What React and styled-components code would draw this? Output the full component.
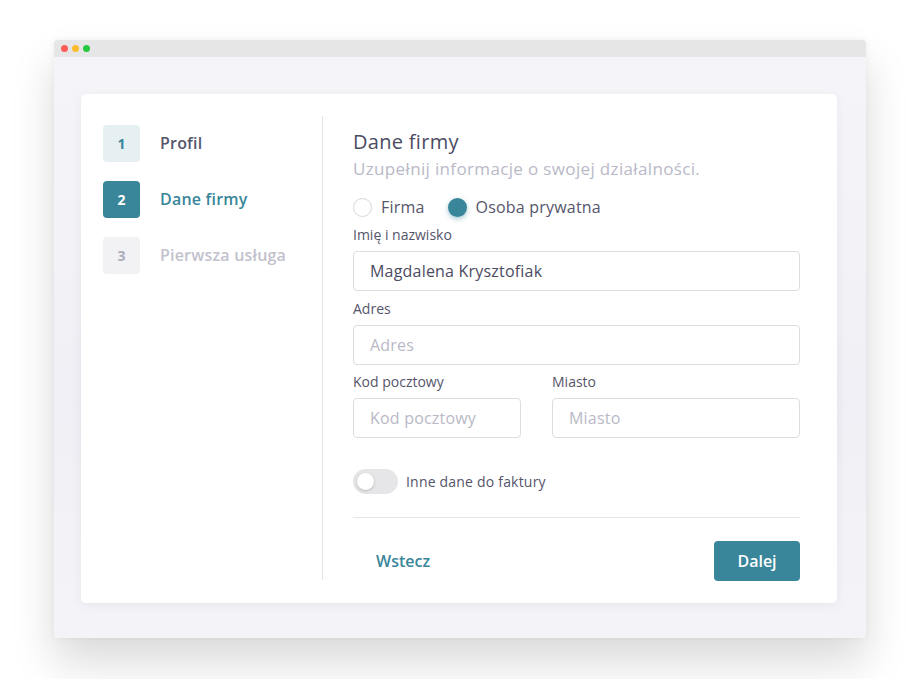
import React from 'react';
import styled, { createGlobalStyle } from 'styled-components';

const teal = '#39869a';

const Global = createGlobalStyle`
  html, body {
    margin: 0;
    background: #ffffff;
    font-family: "Open Sans", "Noto Sans", sans-serif;
  }
  * { box-sizing: border-box; }
`;

const Page = styled.div`
  padding: 40px 54px 41px 54px;
`;

const Window = styled.div`
  width: 812px;
  height: 598px;
  border-radius: 4px;
  overflow: hidden;
  display: flex;
  flex-direction: column;
  box-shadow: 0 24px 44px rgba(0, 0, 0, 0.15), 0 0 6px rgba(0, 0, 0, 0.05);
`;

const TitleBar = styled.div`
  flex-shrink: 0;
  height: 17px;
  background: #e6e6e6;
  display: flex;
  align-items: center;
  gap: 4px;
  padding-left: 7px;
`;

const Dot = styled.span`
  width: 7px;
  height: 7px;
  border-radius: 50%;
  background: ${p => p.color};
`;

const WindowBody = styled.div`
  flex: 1;
  min-height: 0;
  background: linear-gradient(#f5f5f9, #efeff5 60%, #f4f4f8);
  padding: 37px 29px 35px 27px;
  display: flex;
`;

const Card = styled.div`
  flex: 1;
  background: #fff;
  border-radius: 5px;
  box-shadow: 0 2px 10px rgba(60, 60, 100, 0.07);
  padding: 22px 37px 23px 22px;
  display: flex;
`;

const Steps = styled.div`
  width: 219px;
  padding-top: 9px;
  display: flex;
  flex-direction: column;
  gap: 19px;
`;

const Step = styled.div`
  display: flex;
  align-items: center;
  gap: 20px;
  height: 37px;
`;

const stepColors = {
  done: { bg: '#e6f0f3', fg: teal, label: '#56566b' },
  active: { bg: teal, fg: '#fff', label: teal },
  todo: { bg: '#f2f2f4', fg: '#acacb8', label: '#c2c2cd' },
};

const Badge = styled.div`
  width: 37px;
  height: 37px;
  border-radius: 4px;
  background: ${p => stepColors[p.$state].bg};
  color: ${p => stepColors[p.$state].fg};
  font-size: 14px;
  font-weight: 700;
  display: flex;
  align-items: center;
  justify-content: center;
`;

const StepLabel = styled.span`
  font-size: 16px;
  font-weight: 600;
  letter-spacing: 0.2px;
  margin-top: -2px;
  color: ${p => stepColors[p.$state].label};
`;

const Content = styled.div`
  flex: 1;
  border-left: 1px solid #e3e3e8;
  padding: 13px 0 0 30px;
  display: flex;
  flex-direction: column;
`;

const Title = styled.h2`
  margin: 0;
  font-size: 20px;
  font-weight: 500;
  line-height: 26px;
  letter-spacing: 0.3px;
  color: #4b4b62;
`;

const Subtitle = styled.p`
  margin: 3px 0 0;
  font-size: 17px;
  line-height: 22px;
  letter-spacing: 0.35px;
  color: #b9b9c7;
`;

const RadioRow = styled.div`
  display: flex;
  align-items: center;
  margin-top: 16px;
  height: 24px;
`;

const RadioOption = styled.label`
  display: flex;
  align-items: center;
  gap: 9px;
  margin-right: 23px;
  font-size: 16px;
  letter-spacing: 0.2px;
  color: #55556b;
`;

const RadioCircle = styled.span`
  width: 19px;
  height: 19px;
  border-radius: 50%;
  border: ${p => (p.$checked ? 'none' : '1px solid #d6d6de')};
  background: ${p => (p.$checked ? teal : '#fff')};
  box-shadow: ${p => (p.$checked ? '0 2px 5px rgba(57,134,154,0.45)' : 'none')};
`;

const Field = styled.div`
  display: flex;
  flex-direction: column;
  margin-top: ${p => p.$top || 0}px;
  width: ${p => p.$width || 'auto'};
  flex: ${p => (p.$grow ? 1 : 'none')};
`;

const FieldLabel = styled.label`
  font-size: 14px;
  line-height: 18px;
  color: #55556b;
  margin-bottom: 7px;
`;

const Input = styled.input`
  height: 40px;
  width: 100%;
  border: 1px solid #dcdce2;
  border-radius: 4px;
  padding: 0 16px;
  font-family: inherit;
  font-size: 16px;
  letter-spacing: 0.2px;
  color: #4b4b62;
  outline: none;
  &::placeholder {
    color: #b9b9c7;
  }
`;

const Row = styled.div`
  display: flex;
  gap: 31px;
  margin-top: 8px;
`;

const ToggleRow = styled.div`
  display: flex;
  align-items: center;
  gap: 8px;
  margin-top: 31px;
`;

const Toggle = styled.span`
  width: 45px;
  height: 25px;
  border-radius: 13px;
  background: #e6e6e8;
  display: flex;
  align-items: center;
  padding-left: 4px;
`;

const Knob = styled.span`
  width: 17px;
  height: 17px;
  border-radius: 50%;
  background: #fff;
  box-shadow: 0 1px 3px rgba(0, 0, 0, 0.2);
`;

const ToggleLabel = styled.span`
  font-size: 14px;
  letter-spacing: 0.2px;
  color: #55556b;
`;

const Divider = styled.hr`
  border: none;
  border-top: 1px solid #e1e7eb;
  margin: 23px 0 0;
`;

const Actions = styled.div`
  display: flex;
  justify-content: space-between;
  align-items: center;
  margin-top: 23px;
`;

const BackButton = styled.button`
  border: none;
  background: none;
  padding: 0 23px;
  font-family: inherit;
  font-size: 16px;
  font-weight: 600;
  color: ${teal};
`;

const NextButton = styled.button`
  width: 86px;
  height: 40px;
  border: none;
  border-radius: 4px;
  background: ${teal};
  color: #fff;
  font-family: inherit;
  font-size: 16px;
  font-weight: 600;
`;

const steps = [
  { n: 1, label: 'Profil', state: 'done' },
  { n: 2, label: 'Dane firmy', state: 'active' },
  { n: 3, label: 'Pierwsza usługa', state: 'todo' },
];

export default function App() {
  return (
    <Page>
      <Global />
      <Window>
        <TitleBar>
          <Dot color="#fd5d55" />
          <Dot color="#fdbb2e" />
          <Dot color="#27c840" />
        </TitleBar>
        <WindowBody>
          <Card>
            <Steps>
              {steps.map(s => (
                <Step key={s.n}>
                  <Badge $state={s.state}>{s.n}</Badge>
                  <StepLabel $state={s.state}>{s.label}</StepLabel>
                </Step>
              ))}
            </Steps>
            <Content>
              <Title>Dane firmy</Title>
              <Subtitle>Uzupełnij informacje o swojej działalności.</Subtitle>
              <RadioRow>
                <RadioOption>
                  <RadioCircle />
                  Firma
                </RadioOption>
                <RadioOption>
                  <RadioCircle $checked />
                  Osoba prywatna
                </RadioOption>
              </RadioRow>
              <Field $top={8}>
                <FieldLabel>Imię i nazwisko</FieldLabel>
                <Input defaultValue="Magdalena Krysztofiak" />
              </Field>
              <Field $top={9}>
                <FieldLabel>Adres</FieldLabel>
                <Input placeholder="Adres" />
              </Field>
              <Row>
                <Field $width="168px">
                  <FieldLabel>Kod pocztowy</FieldLabel>
                  <Input placeholder="Kod pocztowy" />
                </Field>
                <Field $grow>
                  <FieldLabel>Miasto</FieldLabel>
                  <Input placeholder="Miasto" />
                </Field>
              </Row>
              <ToggleRow>
                <Toggle>
                  <Knob />
                </Toggle>
                <ToggleLabel>Inne dane do faktury</ToggleLabel>
              </ToggleRow>
              <Divider />
              <Actions>
                <BackButton>Wstecz</BackButton>
                <NextButton>Dalej</NextButton>
              </Actions>
            </Content>
          </Card>
        </WindowBody>
      </Window>
    </Page>
  );
}
